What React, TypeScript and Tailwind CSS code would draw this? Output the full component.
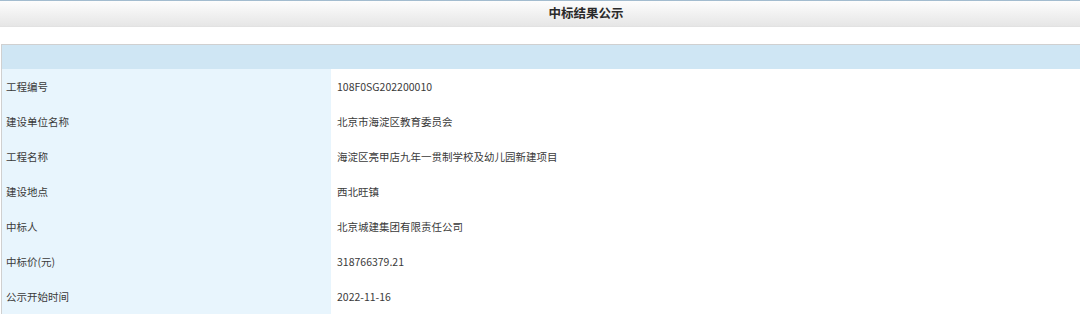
const rows: [string, string][] = [
  ['工程编号', '108F0SG202200010'],
  ['建设单位名称', '北京市海淀区教育委员会'],
  ['工程名称', '海淀区亮甲店九年一贯制学校及幼儿园新建项目'],
  ['建设地点', '西北旺镇'],
  ['中标人', '北京城建集团有限责任公司'],
  ['中标价(元)', '318766379.21'],
  ['公示开始时间', '2022-11-16'],
];

export default function App() {
  return (
    <div
      className="w-[1080px] h-[314px] overflow-hidden bg-white text-[10.5px] text-[#3a3a3a]"
      style={{ fontFamily: '"Microsoft YaHei", "Noto Sans CJK SC", sans-serif' }}
    >
      <div className="h-[1px] bg-[#a3bccf]" />
      <div className="h-[26px] flex items-center justify-center pl-[92px] bg-gradient-to-b from-[#fdfdfd] to-[#e6e6e6] border-b border-[#e2e2e2]">
        <span className="font-bold text-[12.5px] text-[#2a2a2a]">中标结果公示</span>
      </div>
      <div className="h-[17px]" />
      <div className="ml-[1px] border-t border-l border-[#d0d0d0]">
        <div className="h-[24px] bg-[#cfe6f4]" />
        {rows.map(([label, value]) => (
          <div key={label} className="flex h-[35px] items-center">
            <div className="w-[329px] h-full flex items-center pl-[4px] bg-[#e8f5fd]">{label}</div>
            <div className="flex-1 pl-[6px]">{value}</div>
          </div>
        ))}
      </div>
    </div>
  );
}
